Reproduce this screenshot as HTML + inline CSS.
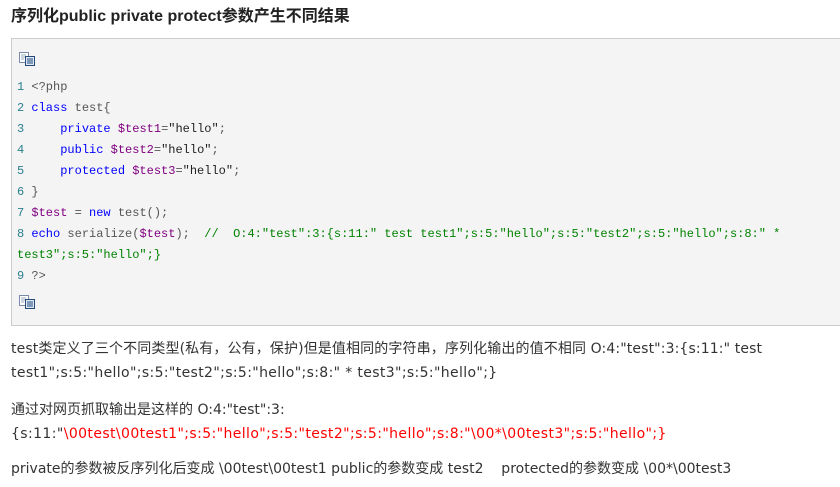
<!DOCTYPE html>
<html><head><meta charset="utf-8"><style>
body{margin:0;background:#fff;width:840px;height:487px;overflow:hidden;font-family:"Liberation Sans","Noto Sans CJK SC",sans-serif;color:#333}
h1{position:absolute;left:11px;top:6px;margin:0;font-size:16px;font-weight:bold;color:#222;line-height:22px}
.box{position:absolute;left:11px;top:38px;width:840px;height:286px;background:#f4f4f4;border:1px solid #ccc;}
.icon{position:absolute;left:7px;width:16px;height:14px}
.code{position:absolute;left:5px;top:38px;font-family:"Liberation Mono",monospace;font-size:12px;line-height:21px;color:#555;white-space:pre}
.n{color:#2a7f8f}.k{color:#00f}.v{color:#800080}.s{color:#222}.c{color:#008200}
p{position:absolute;left:11px;margin:0;font-family:"DejaVu Sans","Noto Sans CJK SC",sans-serif;font-size:14px;line-height:24px;white-space:nowrap}
.r{color:#f00}
</style></head><body>
<h1>序列化public private protect参数产生不同结果</h1>
<div class="box">
<svg class="icon" style="top:13px" viewBox="0 0 16 14"><rect x="0.5" y="0.5" width="9" height="10" fill="#fff" stroke="#7a8aa8"/><path d="M2 3h5M2 5h5M2 7h3" stroke="#9ab"/><rect x="6.5" y="4.5" width="9" height="9" fill="#dfe8f5" stroke="#234a7a"/><path d="M8 7h6M8 9h6M8 11h6" stroke="#234a7a"/></svg>
<div class="code"><span class="n">1</span> &lt;?php
<span class="n">2</span> <span class="k">class</span> test{
<span class="n">3</span>     <span class="k">private</span> <span class="v">$test1</span>=<span class="s">"hello"</span>;
<span class="n">4</span>     <span class="k">public</span> <span class="v">$test2</span>=<span class="s">"hello"</span>;
<span class="n">5</span>     <span class="k">protected</span> <span class="v">$test3</span>=<span class="s">"hello"</span>;
<span class="n">6</span> }
<span class="n">7</span> <span class="v">$test</span> = <span class="k">new</span> test();
<span class="n">8</span> <span class="k">echo</span> serialize(<span class="v">$test</span>);  <span class="c">//  O:4:"test":3:{s:11:" test test1";s:5:"hello";s:5:"test2";s:5:"hello";s:8:" *</span>
<span class="c">test3";s:5:"hello";}</span>
<span class="n">9</span> ?&gt;</div>
<svg class="icon" style="top:256px" viewBox="0 0 16 14"><rect x="0.5" y="0.5" width="9" height="10" fill="#fff" stroke="#7a8aa8"/><path d="M2 3h5M2 5h5M2 7h3" stroke="#9ab"/><rect x="6.5" y="4.5" width="9" height="9" fill="#dfe8f5" stroke="#234a7a"/><path d="M8 7h6M8 9h6M8 11h6" stroke="#234a7a"/></svg>
</div>
<p style="top:337px;letter-spacing:0.12px">test类定义了三个不同类型(私有，公有，保护)但是值相同的字符串，序列化输出的值不相同 O:4:"test":3:{s:11:" test</p>
<p style="top:361px;letter-spacing:0.36px">test1";s:5:"hello";s:5:"test2";s:5:"hello";s:8:" * test3";s:5:"hello";}</p>
<p style="top:398px">通过对网页抓取输出是这样的 O:4:"test":3:</p>
<p style="top:422px;letter-spacing:0.4px">{s:11:"<span class="r">\00test\00test1";s:5:"hello";s:5:"test2";s:5:"hello";s:8:"\00*\00test3";s:5:"hello";}</span></p>
<p style="top:457px">private的参数被反序列化后变成 \00test\00test1 public的参数变成 test2&nbsp;&nbsp;&nbsp; protected的参数变成 \00*\00test3</p>
</body></html>
